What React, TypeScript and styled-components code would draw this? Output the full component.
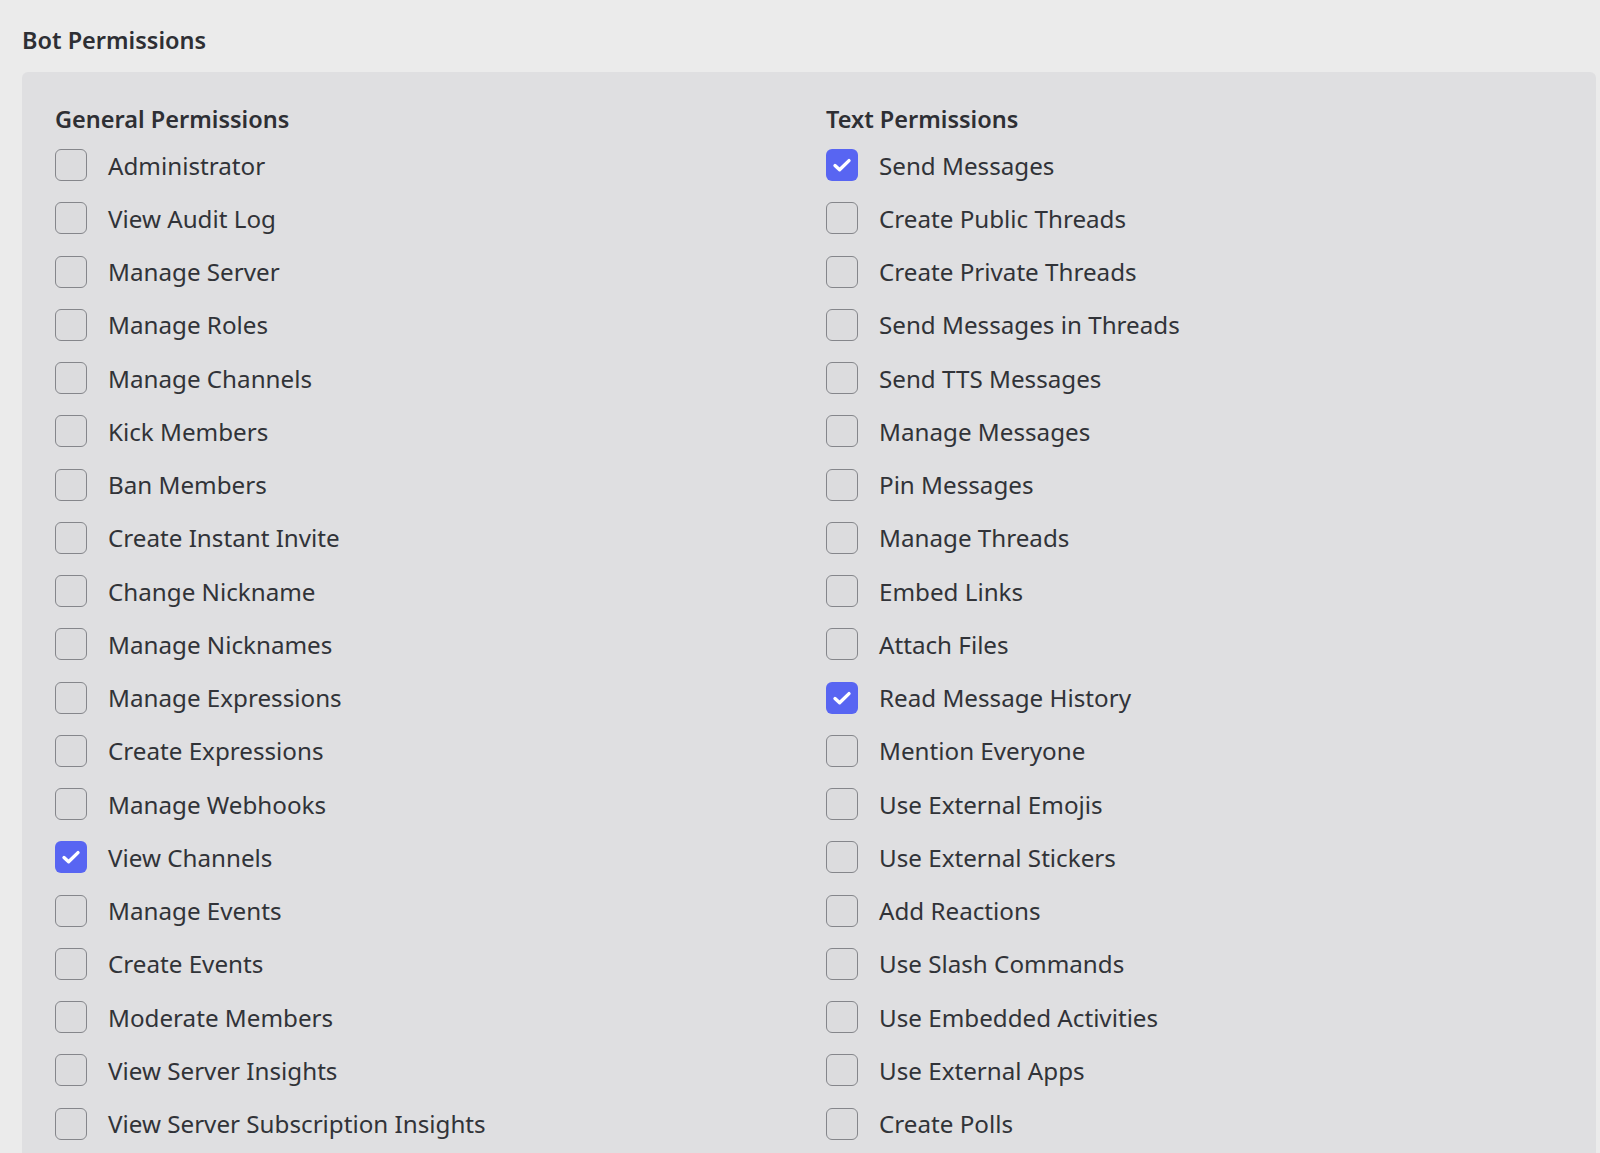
import React from "react";
import styled, { createGlobalStyle } from "styled-components";

const GlobalStyle = createGlobalStyle`
  html, body {
    margin: 0;
    padding: 0;
    background: #ebebeb;
  }
  body {
    font-family: "Noto Sans", "Inter", "Liberation Sans", sans-serif;
    color: #313338;
    -webkit-font-smoothing: antialiased;
  }
`;

const Page = styled.div`
  padding: 25px 4px 0 22px;
  min-height: 1153px;
  box-sizing: border-box;
  overflow: hidden;
`;

const Title = styled.h2`
  margin: 0 0 17px 0;
  font-size: 23.5px;
  font-weight: 600;
  line-height: 30px;
  color: #2e2f34;
`;

const Panel = styled.div`
  background: #dfdfe1;
  border-radius: 6px;
  padding: 31px 33px 20px 33px;
  display: grid;
  grid-template-columns: 771px 1fr;
  min-height: 1100px;
  box-sizing: border-box;
`;

const Column = styled.div`
  display: flex;
  flex-direction: column;
`;

const ColumnTitle = styled.h3`
  margin: 0 0 14px 0;
  font-size: 23.5px;
  font-weight: 600;
  line-height: 32px;
  color: #2e2f34;
`;

const List = styled.div`
  display: flex;
  flex-direction: column;
  gap: 21.25px;
`;

const Row = styled.label`
  display: flex;
  align-items: center;
  gap: 21px;
  height: 32px;
  font-size: 24.2px;
  color: #313338;
  white-space: nowrap;
`;

const Box = styled.span<{ $checked: boolean }>`
  flex: none;
  width: 32px;
  height: 32px;
  box-sizing: border-box;
  border-radius: 6px;
  border: ${(p) => (p.$checked ? "none" : "1.5px solid #85868b")};
  background: ${(p) => (p.$checked ? "#5865f2" : "#dcdcde")};
  display: flex;
  align-items: center;
  justify-content: center;
`;

const general: [string, boolean][] = [
  ["Administrator", false],
  ["View Audit Log", false],
  ["Manage Server", false],
  ["Manage Roles", false],
  ["Manage Channels", false],
  ["Kick Members", false],
  ["Ban Members", false],
  ["Create Instant Invite", false],
  ["Change Nickname", false],
  ["Manage Nicknames", false],
  ["Manage Expressions", false],
  ["Create Expressions", false],
  ["Manage Webhooks", false],
  ["View Channels", true],
  ["Manage Events", false],
  ["Create Events", false],
  ["Moderate Members", false],
  ["View Server Insights", false],
  ["View Server Subscription Insights", false],
];

const text: [string, boolean][] = [
  ["Send Messages", true],
  ["Create Public Threads", false],
  ["Create Private Threads", false],
  ["Send Messages in Threads", false],
  ["Send TTS Messages", false],
  ["Manage Messages", false],
  ["Pin Messages", false],
  ["Manage Threads", false],
  ["Embed Links", false],
  ["Attach Files", false],
  ["Read Message History", true],
  ["Mention Everyone", false],
  ["Use External Emojis", false],
  ["Use External Stickers", false],
  ["Add Reactions", false],
  ["Use Slash Commands", false],
  ["Use Embedded Activities", false],
  ["Use External Apps", false],
  ["Create Polls", false],
];

const Check = () => (
  <svg width="24" height="24" viewBox="0 0 24 24" fill="none">
    <path
      d="M5 12.6 L9.6 16.8 L19 7.6"
      stroke="#ffffff"
      strokeWidth="3.4"
      strokeLinecap="round"
      strokeLinejoin="round"
    />
  </svg>
);

const PermissionColumn = ({ title, items }: { title: string; items: [string, boolean][] }) => (
  <Column>
    <ColumnTitle>{title}</ColumnTitle>
    <List>
      {items.map(([label, checked]) => (
        <Row key={label}>
          <Box $checked={checked}>{checked && <Check />}</Box>
          {label}
        </Row>
      ))}
    </List>
  </Column>
);

export default function App() {
  return (
    <>
      <GlobalStyle />
      <Page>
        <Title>Bot Permissions</Title>
        <Panel>
          <PermissionColumn title="General Permissions" items={general} />
          <PermissionColumn title="Text Permissions" items={text} />
        </Panel>
      </Page>
    </>
  );
}
